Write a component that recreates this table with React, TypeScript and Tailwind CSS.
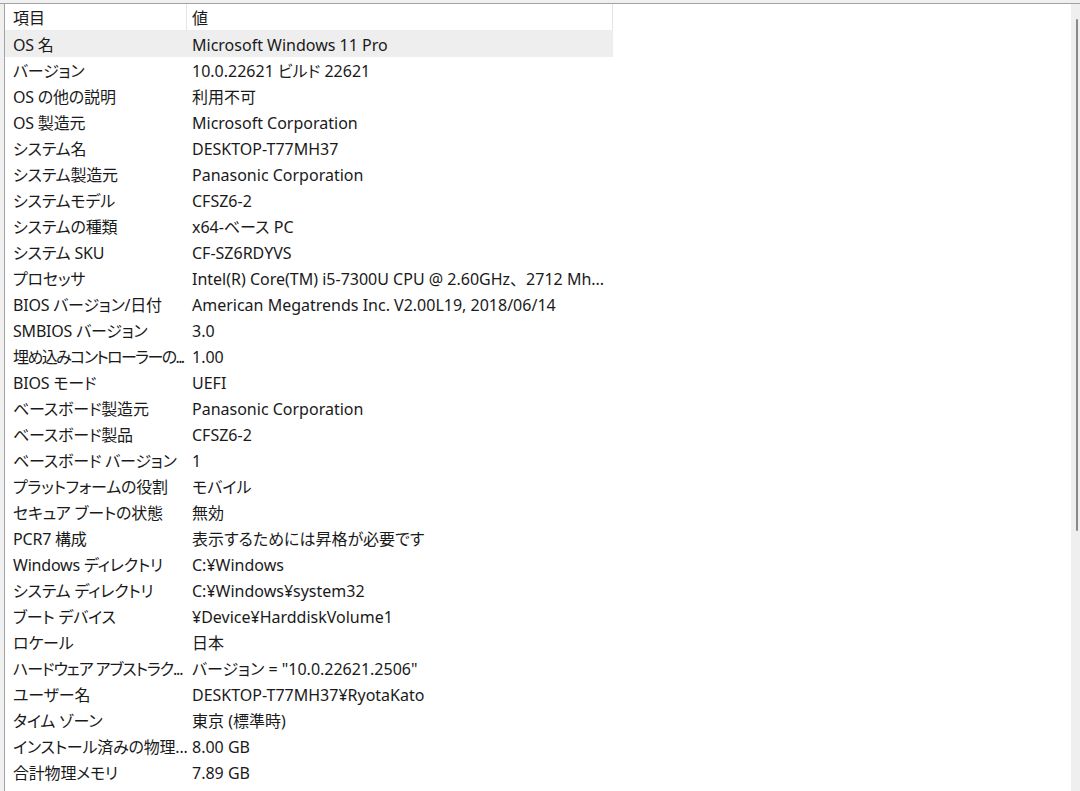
import React from "react";

const rows: [string, React.ReactNode, string?][] = [
  ["OS 名", "Microsoft Windows 11 Pro"],
  ["バージョン", "10.0.22621 ビルド 22621"],
  ["OS の他の説明", "利用不可"],
  ["OS 製造元", "Microsoft Corporation"],
  ["システム名", "DESKTOP-T77MH37"],
  ["システム製造元", "Panasonic Corporation"],
  ["システムモデル", "CFSZ6-2"],
  ["システムの種類", "x64-ベース PC"],
  ["システム SKU", "CF-SZ6RDYVS"],
  [
    "プロセッサ",
    <>
      Intel(R) Core(TM) i5-7300U CPU @ 2.60GHz
      <span className="[font-feature-settings:normal]">、</span>2712 Mh...
    </>,
  ],
  ["BIOS バージョン/日付", "American Megatrends Inc. V2.00L19, 2018/06/14"],
  ["SMBIOS バージョン", "3.0"],
  ["埋め込みコントローラーの...", "1.00", "tracking-[-1.6px]"],
  ["BIOS モード", "UEFI"],
  ["ベースボード製造元", "Panasonic Corporation"],
  ["ベースボード製品", "CFSZ6-2"],
  ["ベースボード バージョン", "1"],
  ["プラットフォームの役割", "モバイル"],
  ["セキュア ブートの状態", "無効"],
  ["PCR7 構成", "表示するためには昇格が必要です"],
  ["Windows ディレクトリ", "C:¥Windows"],
  ["システム ディレクトリ", "C:¥Windows¥system32"],
  ["ブート デバイス", "¥Device¥HarddiskVolume1"],
  ["ロケール", "日本"],
  ["ハードウェア アブストラク...", "バージョン = \"10.0.22621.2506\"", "tracking-[-1.1px]"],
  ["ユーザー名", "DESKTOP-T77MH37¥RyotaKato"],
  ["タイム ゾーン", "東京 (標準時)"],
  ["インストール済みの物理...", "8.00 GB"],
  ["合計物理メモリ", "7.89 GB"],
];

export default function App() {
  return (
    <div
      className="w-[1080px] h-[791px] overflow-hidden bg-[#f0f0f0] pt-[3px] text-[16px] text-[#1a1a1a]"
      style={{
        fontFamily: '"Noto Sans", "Noto Sans CJK JP", sans-serif',
        fontFeatureSettings: '"palt"',
      }}
    >
      <div className="flex h-[788px] border-t border-[#a3a3a3]">
        <div className="w-[5px] bg-[#f0f0f0] border-r border-[#a3a3a3]" />
        <div className="flex-1 bg-white">
          <div className="flex h-[27px] w-[608px] border-b border-[#ececec]">
            <div className="w-[182px] border-r border-[#e5e5e5] pl-[8px] pt-[1px] leading-[27px]">項目</div>
            <div className="flex-1 border-r border-[#e5e5e5] pl-[5px] pt-[1px] leading-[27px]">値</div>
          </div>
          {rows.map(([k, v, tight], i) => (
            <div
              key={i}
              className={
                "flex h-[26px] w-[608px] leading-[27px] pt-[1px] whitespace-nowrap " +
                (i === 0 ? "bg-[#eeeeee]" : "")
              }
            >
              <div
                className={
                  "w-[182px] pl-[8px] overflow-hidden " +
                  (tight ? tight : "tracking-[-0.2px]")
                }
              >
                {k}
              </div>
              <div className="flex-1 pl-[5px] overflow-hidden">{v}</div>
            </div>
          ))}
        </div>
        <div className="w-[9px] bg-[#efefef] pt-[15px] flex justify-end pr-[2px]">
          <div className="w-[2px] h-[512px] bg-[#8a8a8a] rounded-full" />
        </div>
      </div>
    </div>
  );
}
